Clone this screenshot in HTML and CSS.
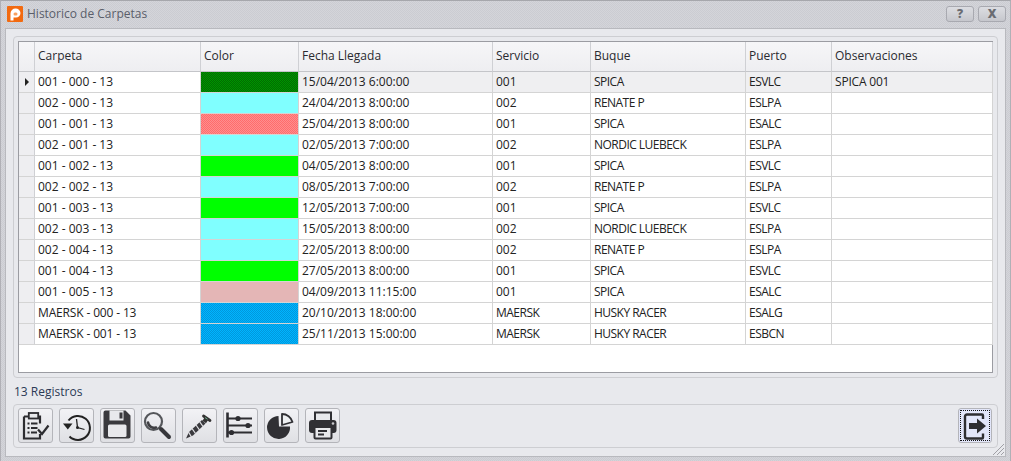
FILE: index.html
```html
<!DOCTYPE html>
<html lang="es">
<head>
<meta charset="utf-8">
<title>Historico de Carpetas</title>
<link rel="stylesheet" href="styles.css">
</head>
<body>
<div class="window">
  <header class="titlebar">
    <svg class="app-icon" width="16" height="16" viewBox="0 0 16 16"><rect width="16" height="16" rx="1" fill="#f26a10"/><path d="M3.500 14.500V7.500A5 5 0 0 1 8.500 2.500A4.800 4.800 0 0 1 13.500 7A4.500 4.500 0 0 1 9 11.500H6.500V14.500Z" fill="#fff"/><rect x="6.500" y="6.500" width="4" height="3" rx="1.500" fill="#f8a060"/></svg>
    <span class="title">Historico de Carpetas</span>
    <div class="caption-buttons">
      <button class="caption-btn">?</button>
      <button class="caption-btn">X</button>
    </div>
  </header>
  <main class="client">
    <section class="grid-group">
      <div class="grid-wrap">
        <table class="grid">
          <colgroup><col class="c0"><col class="c1"><col class="c2"><col class="c3"><col class="c4"><col class="c5"><col class="c6"><col class="c7"></colgroup>
          <thead><tr><th></th><th>Carpeta</th><th>Color</th><th>Fecha Llegada</th><th>Servicio</th><th>Buque</th><th>Puerto</th><th>Observaciones</th></tr></thead>
          <tbody>
            <tr class="current"><td class="rh"><span class="arrow"></span></td><td class="white">001 - 000 - 13</td><td class="dgreen"></td><td>15/04/2013 6:00:00</td><td>001</td><td class="caps">SPICA</td><td class="caps">ESVLC</td><td class="note">SPICA 001</td></tr>
            <tr><td class="rh"></td><td>002 - 000 - 13</td><td class="cyan"></td><td>24/04/2013 8:00:00</td><td>002</td><td class="caps">RENATE P</td><td class="caps">ESLPA</td><td></td></tr>
            <tr><td class="rh"></td><td>001 - 001 - 13</td><td class="red"></td><td>25/04/2013 8:00:00</td><td>001</td><td class="caps">SPICA</td><td class="caps">ESALC</td><td></td></tr>
            <tr><td class="rh"></td><td>002 - 001 - 13</td><td class="cyan"></td><td>02/05/2013 7:00:00</td><td>002</td><td class="caps">NORDIC LUEBECK</td><td class="caps">ESLPA</td><td></td></tr>
            <tr><td class="rh"></td><td>001 - 002 - 13</td><td class="green"></td><td>04/05/2013 8:00:00</td><td>001</td><td class="caps">SPICA</td><td class="caps">ESVLC</td><td></td></tr>
            <tr><td class="rh"></td><td>002 - 002 - 13</td><td class="cyan"></td><td>08/05/2013 7:00:00</td><td>002</td><td class="caps">RENATE P</td><td class="caps">ESLPA</td><td></td></tr>
            <tr><td class="rh"></td><td>001 - 003 - 13</td><td class="green"></td><td>12/05/2013 7:00:00</td><td>001</td><td class="caps">SPICA</td><td class="caps">ESVLC</td><td></td></tr>
            <tr><td class="rh"></td><td>002 - 003 - 13</td><td class="cyan"></td><td>15/05/2013 8:00:00</td><td>002</td><td class="caps">NORDIC LUEBECK</td><td class="caps">ESLPA</td><td></td></tr>
            <tr><td class="rh"></td><td>002 - 004 - 13</td><td class="cyan"></td><td>22/05/2013 8:00:00</td><td>002</td><td class="caps">RENATE P</td><td class="caps">ESLPA</td><td></td></tr>
            <tr><td class="rh"></td><td>001 - 004 - 13</td><td class="green"></td><td>27/05/2013 8:00:00</td><td>001</td><td class="caps">SPICA</td><td class="caps">ESVLC</td><td></td></tr>
            <tr><td class="rh"></td><td>001 - 005 - 13</td><td class="pink"></td><td>04/09/2013 11:15:00</td><td>001</td><td class="caps">SPICA</td><td class="caps">ESALC</td><td></td></tr>
            <tr><td class="rh"></td><td class="tight">MAERSK - 000 - 13</td><td class="blue"></td><td>20/10/2013 18:00:00</td><td class="caps">MAERSK</td><td class="caps">HUSKY RACER</td><td class="caps">ESALG</td><td></td></tr>
            <tr><td class="rh"></td><td class="tight">MAERSK - 001 - 13</td><td class="blue"></td><td>25/11/2013 15:00:00</td><td class="caps">MAERSK</td><td class="caps">HUSKY RACER</td><td class="caps">ESBCN</td><td></td></tr>
          </tbody>
        </table>
      </div>
    </section>
    <div class="status">13 Registros</div>
    <section class="toolbar">
      <button class="tool"><svg width="32" height="32" viewBox="0 0 32 32"><path d="M4 6.500h4.500M18.500 6.500H20v7M20 24v4.500H4V6.500" fill="none" stroke="#2c2c30" stroke-width="2.200"/><rect x="8.800" y="3" width="9.400" height="5.500" fill="#e8e9ec" stroke="#2c2c30" stroke-width="1.800"/><path d="M7.500 12.500h2v2h-2zM7.500 17h2v2h-2zM7.500 21.500h2v2h-2zM11 12.500h6.500v2H11zM11 17h6.500v2H11zM11 21.500h6v2H11z" fill="#2c2c30"/><path d="M18 19.500l4 4.500 6.500-8.500" fill="none" stroke="#2c2c30" stroke-width="2.200"/></svg></button>
      <button class="tool"><svg width="32" height="32" viewBox="0 0 32 32"><path d="M7.500 10.500A12 12 0 1 1 8.500 26.500" fill="none" stroke="#222" stroke-width="2"/><path d="M2 13.500h9.500l-4.700 6Z" fill="#222"/><path d="M15.500 9l1 8.500 7 2" fill="none" stroke="#222" stroke-width="1.300"/><circle cx="16.500" cy="17.500" r="1.500" fill="#222"/></svg></button>
      <button class="tool"><svg width="32" height="32" viewBox="0 0 32 32"><path d="M1.500 2.500a2 2 0 0 1 2-2h20l5 5v21a2 2 0 0 1-2 2h-23a2 2 0 0 1-2-2Z" fill="#3a3a3e"/><rect x="7.500" y="0.500" width="14" height="10" fill="#e8e9ec"/><rect x="17.500" y="2.500" width="3" height="6" fill="#3a3a3e"/><rect x="6" y="14.500" width="18.500" height="12.500" rx="1.500" fill="#e8e9ec"/></svg></button>
      <button class="tool"><svg width="32" height="32" viewBox="0 0 32 32"><circle cx="10.500" cy="11.500" r="8.500" fill="none" stroke="#55575b" stroke-width="2.200"/><path d="M5 12.500a6 6 0 0 0 8 5" fill="none" stroke="#3f3f43" stroke-width="2.600" stroke-linecap="round"/><path d="M18 19l8 8" stroke="#36363a" stroke-width="4" stroke-linecap="round"/></svg></button>
      <button class="tool"><svg width="32" height="32" viewBox="0 0 32 32"><path d="M2 28.500L5 22 18 10l3.500 3.500L9 25.500Z" fill="#3a3a3e"/><path d="M7.500 27l-3-5M11.500 23.500l-3.500-5M15.500 20l-3.500-5M19 16.500l-3.500-5" stroke="#e0e0e4" stroke-width="1.300"/><path d="M19.500 6l6.500 4.500" stroke="#333" stroke-width="2.800" stroke-linecap="round"/><path d="M21.500 8l-2 3.500M23 9.500l-2 3" stroke="#333" stroke-width="2.400"/><path d="M21 7.500l2.500 1.700" stroke="#6aa888" stroke-width="1"/></svg></button>
      <button class="tool"><svg width="32" height="32" viewBox="0 0 32 32"><path d="M2.500 2.500v25" stroke="#2e2e32" stroke-width="2.600"/><path d="M2.500 8.500H27M2.500 15.500H27M2.500 22.500H27" stroke="#2e2e32" stroke-width="2"/><circle cx="13" cy="8.500" r="2.600" fill="#2e2e32"/><circle cx="23" cy="15.500" r="2.600" fill="#2e2e32"/><circle cx="6.500" cy="22.500" r="2.600" fill="#2e2e32"/></svg></button>
      <button class="tool"><svg width="32" height="32" viewBox="0 0 32 32"><path d="M12.500 6L13 16.500H24A11.500 11.500 0 1 1 12.500 6Z" fill="#303034"/><path d="M16 4A11 11 0 0 1 26.500 12L16 15Z" fill="#eef0f2" stroke="#303034" stroke-width="1.800" stroke-linejoin="round"/></svg></button>
      <button class="tool"><svg width="32" height="32" viewBox="0 0 32 32"><path d="M8 11V2.500h16V11" fill="#e8e9ec" stroke="#303034" stroke-width="2"/><rect x="2" y="10" width="27.500" height="13" rx="3" fill="#303034"/><rect x="7.500" y="17" width="17" height="11.500" rx="1" fill="#e8e9ec" stroke="#303034" stroke-width="2"/><path d="M11 21h9M11 24.500h6" stroke="#303034" stroke-width="1.800"/><circle cx="26" cy="13.500" r="1.300" fill="#c8c8cc"/></svg></button>
      <button class="tool exit"><svg width="26" height="28" viewBox="0 0 26 28"><path d="M21 7V3.500a1 1 0 0 0-1-1H5a2 2 0 0 0-2 2v20a2 2 0 0 0 2 2h15a1 1 0 0 0 1-1v-4" fill="none" stroke="#2e2e32" stroke-width="2.400"/><path d="M7 11h8V6.500l9 7.500-9 7.500V17H7Z" fill="#2e2e32"/></svg></button>
    </section>
    <svg class="grip" width="14" height="14" viewBox="0 0 14 14"><path d="M13 2L2 13M13 6L6 13M13 10L10 13" stroke="#a0a0a6" stroke-width="1"/></svg>
  </main>
</div>
</body>
</html>
```

FILE: styles.css
```css
* { box-sizing: border-box; }
html, body { margin: 0; height: 100%; overflow: hidden; }
body { background: #d8d8dc; font-family: "Open Sans", "Noto Sans", sans-serif; font-size: 12px; color: #222; }
.window { width: 1011px; height: 461px; display: flex; flex-direction: column; background-color: #cfd0d6; background-image: conic-gradient(#d4d5da 25%, #cbccd2 0 50%, #d4d5da 0 75%, #cbccd2 0); background-size: 2px 2px; border-top: 1px solid #a6a7ac; border-left: 1px solid #b0b0b6; border-right: 1px solid #b0b0b6; padding: 0 4px 5px 4px; }
.titlebar { height: 27px; flex: none; display: flex; align-items: center; gap: 4px; padding: 0 0 2px 2px; }
.app-icon { flex: none; }
.title { font-size: 12px; color: #5a5e6a; }
.caption-buttons { margin-left: auto; display: flex; gap: 4px; }
.caption-btn { width: 28px; height: 16px; padding: 0; border: 1px solid #a8a9b0; border-radius: 3px; background: linear-gradient(#dcdde2, #c6c7cd); color: #6a6c72; font: 800 12px/13px "Open Sans", sans-serif; }
.client { flex: 1; position: relative; background: #e8e9ed; border: 1px solid #b8b9be; padding: 7px 7px 8px 7px; display: flex; flex-direction: column; }
.grid-group { height: 342px; flex: none; border: 1px solid #cdced2; border-radius: 4px; padding: 4px; }
.grid-wrap { height: 100%; background: #fff; border: 1px solid #9b9ca2; }
.grid { border-collapse: separate; border-spacing: 0; table-layout: fixed; width: 974px; }
.c0 { width: 16px; } .c1 { width: 166px; } .c2 { width: 98px; } .c3 { width: 194px; } .c4 { width: 98px; } .c5 { width: 155px; } .c6 { width: 86px; } .c7 { width: 161px; }
.grid th { height: 30px; padding: 0 3px 2px; font-weight: 400; font-size: 12px; text-align: left; background: linear-gradient(#f6f6f8, #eeeef1); border-right: 1px solid #cfd0d4; border-bottom: 1px solid #c4c5c9; color: #2a2a30; }
.grid td { height: 21px; padding: 0 3px 2px; border-right: 1px solid #d4d4d4; border-bottom: 1px solid #d4d4d4; white-space: nowrap; overflow: hidden; color: #222; }
.grid td.rh { background: #eeeef1; padding: 0; border-right-color: #cfd0d4; }
.current td { background: #efeff1; }
.current td.white { background: #fff; }
.caps { letter-spacing: -0.52px; }
.note { letter-spacing: -0.2px; }
.tight { letter-spacing: -0.15px; }
.arrow { display: block; width: 0; height: 0; margin-left: 6px; border-left: 4px solid #222; border-top: 4px solid transparent; border-bottom: 4px solid transparent; }
.grid td.dgreen { background: conic-gradient(#009200 25%, #006e00 0 50%, #009200 0 75%, #006e00 0) 0 0 / 2px 2px; }
.grid td.cyan { background: #80ffff; }
.grid td.red { background: conic-gradient(#ff6c6c 25%, #ff8e8e 0 50%, #ff6c6c 0 75%, #ff8e8e 0) 0 0 / 2px 2px; }
.grid td.green { background: #00ff00; }
.grid td.pink { background: #e4b6b6; }
.grid td.blue { background: conic-gradient(#00b4ff 25%, #0098dc 0 50%, #00b4ff 0 75%, #0098dc 0) 0 0 / 2px 2px; }
.status { height: 26px; flex: none; display: flex; align-items: center; padding: 1px 1px 0; color: #2b3a55; }
.toolbar { height: 44px; flex: none; border: 1px solid #cdced2; border-radius: 4px; padding: 3px 4px; display: flex; gap: 6px; }
.tool { width: 35px; height: 35px; padding: 0; flex: none; display: flex; align-items: center; justify-content: center; border: 1px solid #b4b5ba; border-radius: 3px; background: linear-gradient(#f2f2f5, #dfe0e4); }
.tool.exit { width: 34px; margin-left: auto; margin-right: 1px; background: #e2e6fa; outline: 1px dotted #111; outline-offset: -3px; }
.grip { position: absolute; right: 0; bottom: 0; }
```
